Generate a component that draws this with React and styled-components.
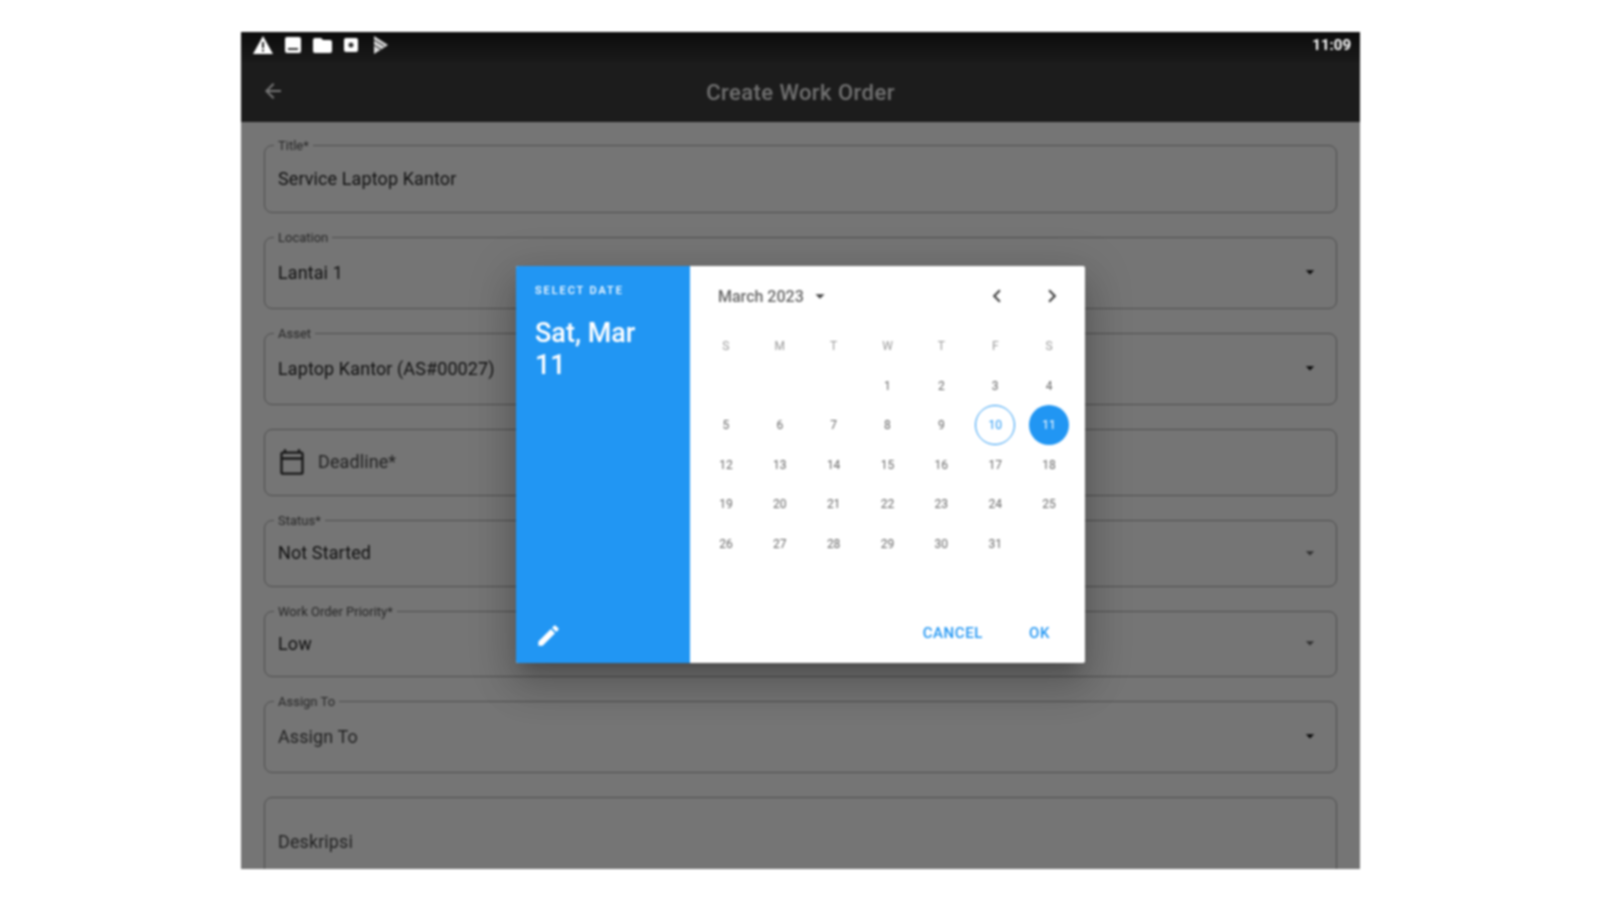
import React from "react";
import styled, { createGlobalStyle } from "styled-components";
import {
  MdArrowBack,
  MdArrowDropDown,
  MdChevronLeft,
  MdChevronRight,
  MdEdit,
  MdOutlineCalendarToday,
} from "react-icons/md";

const GlobalStyle = createGlobalStyle`
  html, body {
    margin: 0;
    padding: 0;
    background: #fff;
    font-family: Roboto, "Liberation Sans", sans-serif;
  }
`;

const Page = styled.div`
  width: 1600px;
  height: 900px;
  padding: 32px 0 0 241px;
  box-sizing: border-box;
  overflow: hidden;
`;

const Device = styled.div`
  position: relative;
  width: 1119px;
  height: 837px;
  display: flex;
  flex-direction: column;
  overflow: hidden;
  background: #fff;
  filter: blur(0.8px);
`;

const StatusBar = styled.div`
  position: relative;
  z-index: 3;
  height: 30px;
  flex: none;
  display: flex;
  align-items: center;
  justify-content: space-between;
  padding: 0 9px 4px 12px;
  box-sizing: border-box;
  background: linear-gradient(#0c0c0c, #1a1a1a);
`;

const StatusIcons = styled.div`
  display: flex;
  align-items: center;
  gap: 12px;
`;

const Clock = styled.span`
  color: #fff;
  font-size: 15px;
  font-weight: 700;
`;

const AppBar = styled.div`
  height: 60px;
  flex: none;
  display: flex;
  align-items: center;
  justify-content: center;
  position: relative;
  background: #3e3e3e;
  color: #fff;
`;

const BackButton = styled.span`
  position: absolute;
  left: 20px;
  top: 17px;
  display: flex;
  font-size: 24px;
  color: #fff;
`;

const AppTitle = styled.h1`
  margin: 0;
  font-size: 22px;
  font-weight: 500;
  letter-spacing: 0.45px;
  color: #f4f4f4;
`;

const Form = styled.div`
  flex: 1;
  display: flex;
  flex-direction: column;
  gap: 24px;
  padding: 23px 23px 0 23px;
  overflow: hidden;
`;

const Field = styled.div`
  position: relative;
  flex: none;
  height: ${({ $h }) => $h}px;
  box-sizing: border-box;
  border: 1.5px solid #a8a8a8;
  border-radius: 8px;
  display: flex;
  align-items: ${({ $top }) => ($top ? "flex-start" : "center")};
  padding: ${({ $top }) => ($top ? "33px" : "0")} 14px ${({ $top }) => ($top ? "0" : "2px")} 13px;
  font-size: 18px;
  letter-spacing: 0.1px;
  color: ${({ $muted }) => ($muted ? "#4a4a4a" : "#262626")};
`;

const FieldLabel = styled.span`
  position: absolute;
  top: -7px;
  left: 9px;
  padding: 0 4px;
  background: #fff;
  font-size: 13px;
  line-height: 14px;
  letter-spacing: 0;
  color: #555;
`;

const DateIcon = styled.span`
  display: flex;
  font-size: 28px;
  margin-right: 12px;
  color: #333;
`;

const DropArrow = styled.span`
  margin-left: auto;
  margin-right: 2px;
  display: flex;
  font-size: 20px;
  color: ${({ $dim }) => ($dim ? "#666" : "#111")};
`;

const Scrim = styled.div`
  position: absolute;
  inset: 0;
  z-index: 2;
  background: rgba(0, 0, 0, 0.54);
  display: flex;
  justify-content: center;
  align-items: flex-start;
  padding-top: 234px;
  box-sizing: border-box;
`;

const Dialog = styled.div`
  width: 569px;
  height: 397px;
  display: flex;
  background: #fff;
  border-radius: 2px;
  overflow: hidden;
  box-shadow: 0 11px 15px -7px rgba(0, 0, 0, 0.2),
    0 24px 38px 3px rgba(0, 0, 0, 0.14), 0 9px 46px 8px rgba(0, 0, 0, 0.12);
`;

const Side = styled.div`
  width: 174px;
  flex: none;
  box-sizing: border-box;
  padding: 18px 19px 14px;
  display: flex;
  flex-direction: column;
  background: #2196f3;
  color: #fff;
`;

const SideLabel = styled.div`
  font-size: 11px;
  line-height: 14px;
  font-weight: 500;
  letter-spacing: 1.9px;
`;

const SideDate = styled.div`
  margin-top: 19px;
  max-width: 120px;
  font-size: 27px;
  line-height: 32px;
  font-weight: 500;
`;

const EditButton = styled.span`
  margin-top: auto;
  display: flex;
  font-size: 27px;
`;

const Main = styled.div`
  flex: 1;
  display: flex;
  flex-direction: column;
  padding: 0 9px;
`;

const CalHeader = styled.div`
  height: 60px;
  flex: none;
  display: flex;
  align-items: center;
  padding: 0 11px 0 19px;
`;

const MonthLabel = styled.span`
  font-size: 16px;
  font-weight: 500;
  color: #666;
`;

const MonthCaret = styled.span`
  display: flex;
  font-size: 22px;
  margin-left: 5px;
  color: #444;
`;

const Pager = styled.div`
  margin-left: auto;
  display: flex;
  gap: 29px;
  font-size: 26px;
  color: #444;
`;

const Days = styled.div`
  display: grid;
  grid-template-columns: repeat(7, 1fr);
  grid-auto-rows: 39.5px;
`;

const WeekDay = styled.div`
  display: flex;
  align-items: center;
  justify-content: center;
  font-size: 12px;
  color: #999;
`;

const Day = styled.div`
  justify-self: center;
  width: 40px;
  height: 40px;
  box-sizing: border-box;
  border-radius: 50%;
  display: flex;
  align-items: center;
  justify-content: center;
  font-size: 12px;
  color: ${({ $selected, $today }) =>
    $selected ? "#fff" : $today ? "#2196f3" : "#666"};
  background: ${({ $selected }) => ($selected ? "#2196f3" : "transparent")};
  border: ${({ $today }) => ($today ? "1px solid #2196f3" : "0")};
`;

const Actions = styled.div`
  margin-top: auto;
  height: 39px;
  display: flex;
  align-items: flex-start;
  justify-content: flex-end;
  gap: 46px;
  padding: 0 26px 0 0;
`;

const TextButton = styled.span`
  font-size: 15px;
  font-weight: 500;
  letter-spacing: 0.6px;
  color: #2196f3;
`;

const fields = [
  { label: "Title*", value: "Service Laptop Kantor", h: 68 },
  { label: "Location", value: "Lantai 1", h: 72, arrow: true },
  { label: "Asset", value: "Laptop Kantor (AS#00027)", h: 72, arrow: true },
  { value: "Deadline*", h: 67, date: true, muted: true },
  { label: "Status*", value: "Not Started", h: 67, arrow: true, dim: true },
  { label: "Work Order Priority*", value: "Low", h: 66, arrow: true, dim: true },
  { label: "Assign To", value: "Assign To", h: 72, arrow: true, muted: true },
  { value: "Deskripsi", h: 120, top: true, muted: true },
];

const weekDays = ["S", "M", "T", "W", "T", "F", "S"];
const blanks = [0, 1, 2];
const dates = Array.from({ length: 31 }, (_, i) => i + 1);

const StatusIconSet = () => (
  <StatusIcons>
    <svg width="20" height="18" viewBox="0 0 20 18">
      <path d="M10 0 20 18H0z" fill="#fff" />
      <path d="M9 6h2v6H9zM9 13.5h2v2H9z" fill="#222" />
    </svg>
    <svg width="16" height="16" viewBox="0 0 16 16">
      <rect width="16" height="16" rx="2" fill="#fff" />
      <path d="M3 11h10v2H3z" fill="#333" />
    </svg>
    <svg width="19" height="15" viewBox="0 0 19 15">
      <path d="M2 0h6l2 2h7a2 2 0 0 1 2 2v9a2 2 0 0 1-2 2H2a2 2 0 0 1-2-2V2a2 2 0 0 1 2-2z" fill="#fff" />
    </svg>
    <svg width="14" height="14" viewBox="0 0 14 14">
      <rect width="14" height="14" rx="2" fill="#fff" />
      <circle cx="7" cy="7" r="2.5" fill="#333" />
    </svg>
    <svg width="20" height="20" viewBox="0 0 20 20">
      <path d="M4 1 18 10 4 19z" fill="#ddd" />
      <path d="M4 5 14 11M4 10l8 5" stroke="#444" strokeWidth="1.4" />
    </svg>
  </StatusIcons>
);

const App = () => (
  <Page>
    <GlobalStyle />
    <Device>
      <StatusBar>
        <StatusIconSet />
        <Clock>11:09</Clock>
      </StatusBar>
      <AppBar>
        <BackButton>
          <MdArrowBack />
        </BackButton>
        <AppTitle>Create Work Order</AppTitle>
      </AppBar>
      <Form>
        {fields.map((f) => (
          <Field key={f.value} $h={f.h} $top={f.top} $muted={f.muted}>
            {f.label && <FieldLabel>{f.label}</FieldLabel>}
            {f.date && (
              <DateIcon>
                <MdOutlineCalendarToday />
              </DateIcon>
            )}
            {f.value}
            {f.arrow && (
              <DropArrow $dim={f.dim}>
                <MdArrowDropDown />
              </DropArrow>
            )}
          </Field>
        ))}
      </Form>
      <Scrim>
        <Dialog>
          <Side>
            <SideLabel>SELECT DATE</SideLabel>
            <SideDate>Sat, Mar 11</SideDate>
            <EditButton>
              <MdEdit />
            </EditButton>
          </Side>
          <Main>
            <CalHeader>
              <MonthLabel>March 2023</MonthLabel>
              <MonthCaret>
                <MdArrowDropDown />
              </MonthCaret>
              <Pager>
                <MdChevronLeft />
                <MdChevronRight />
              </Pager>
            </CalHeader>
            <Days>
              {weekDays.map((d, i) => (
                <WeekDay key={i}>{d}</WeekDay>
              ))}
              {blanks.map((b) => (
                <span key={b} />
              ))}
              {dates.map((d) => (
                <Day key={d} $today={d === 10} $selected={d === 11}>
                  {d}
                </Day>
              ))}
            </Days>
            <Actions>
              <TextButton>CANCEL</TextButton>
              <TextButton>OK</TextButton>
            </Actions>
          </Main>
        </Dialog>
      </Scrim>
    </Device>
  </Page>
);

export default App;
